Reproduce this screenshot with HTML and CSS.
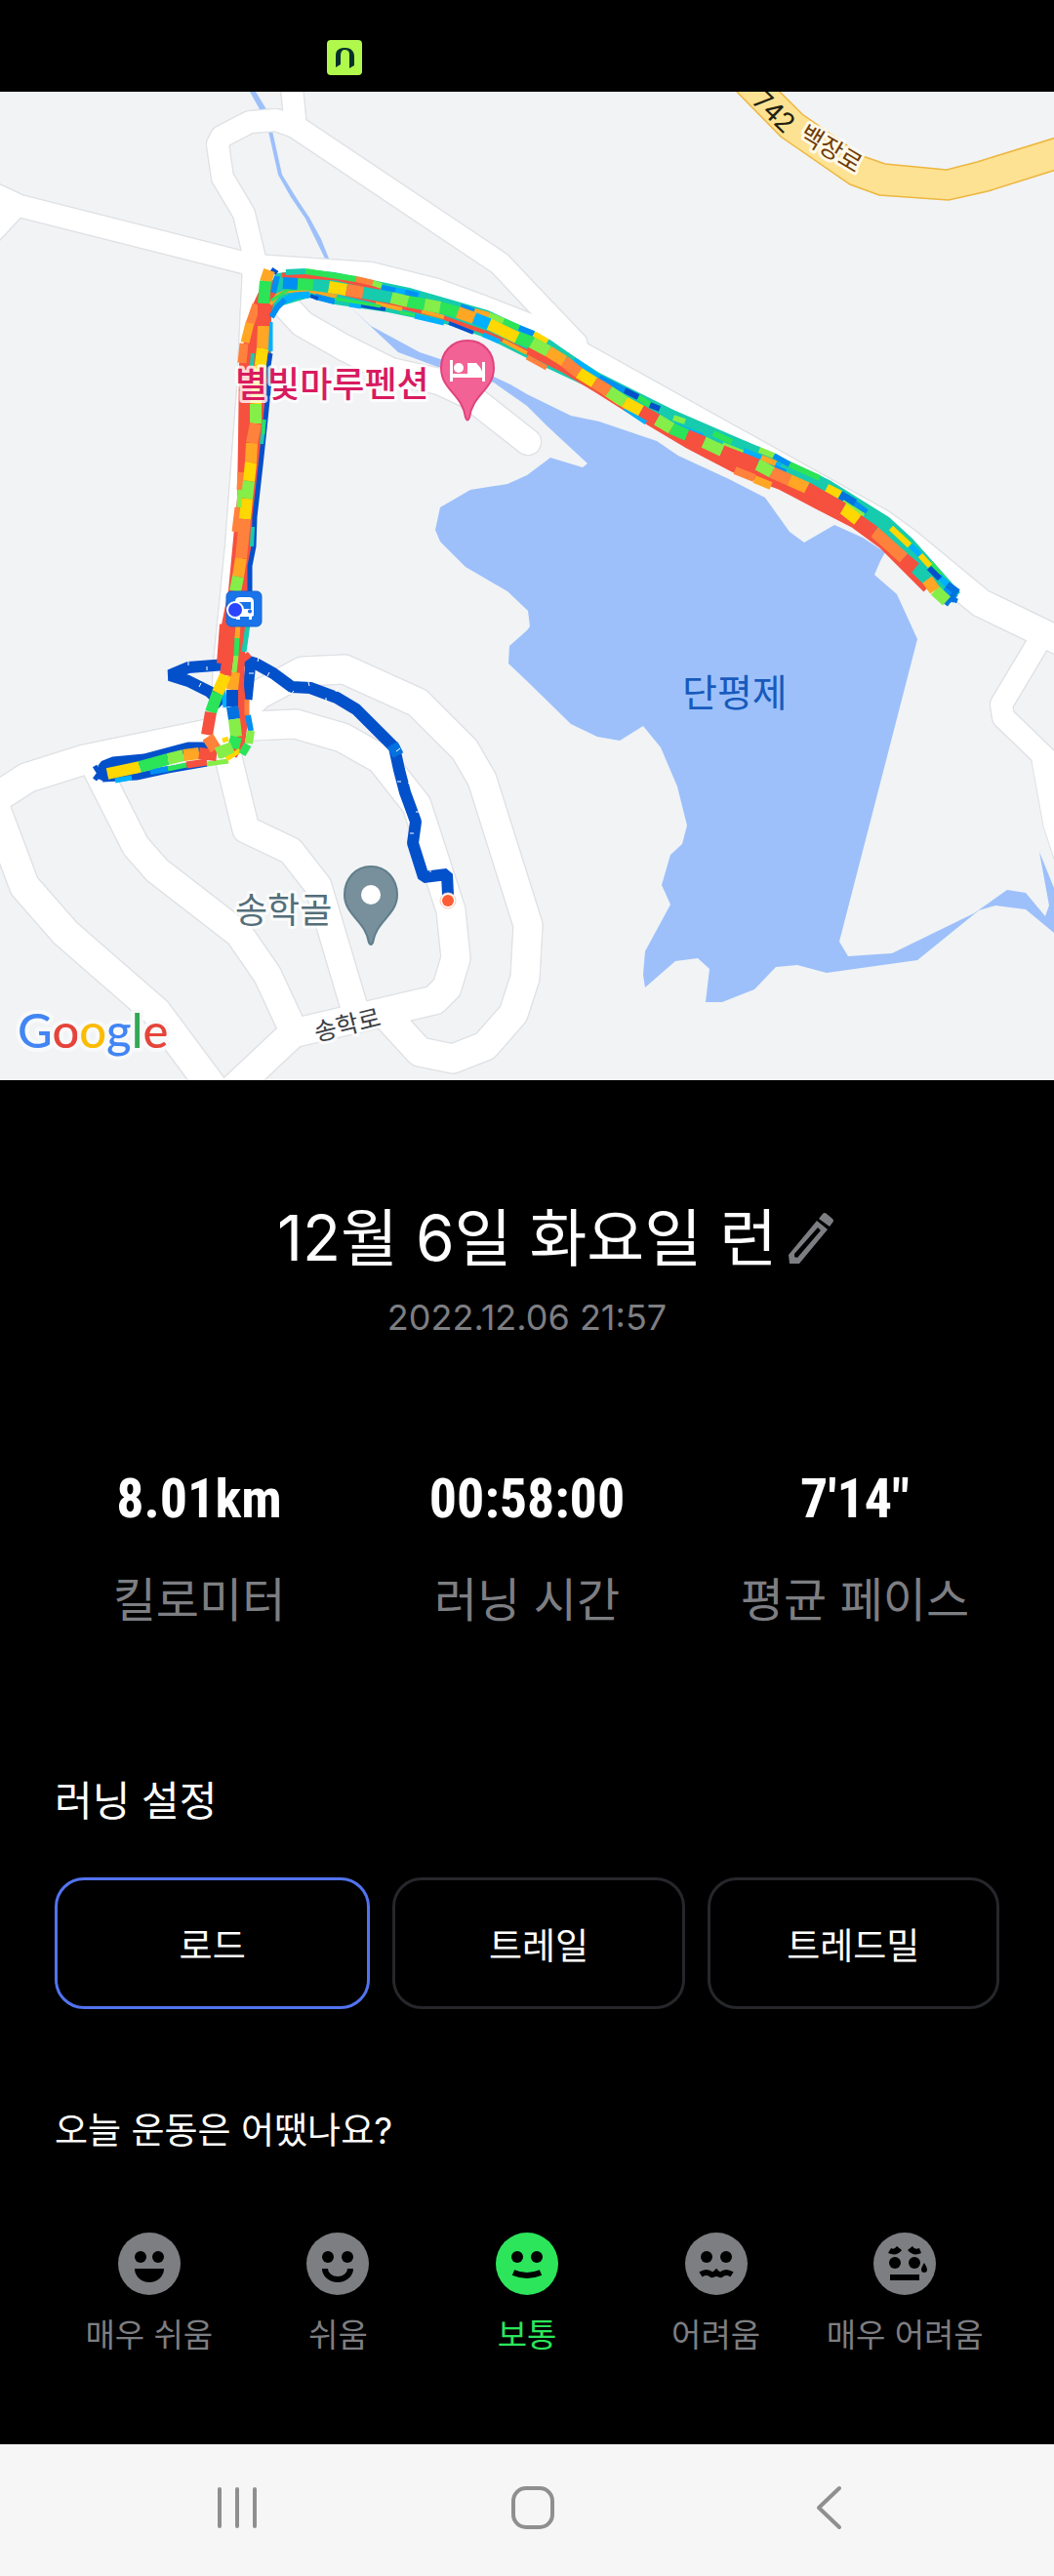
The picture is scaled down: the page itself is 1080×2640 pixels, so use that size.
FILE: index.html
```html
<!DOCTYPE html>
<html lang="ko">

<head>
    <meta charset="UTF-8">
    <meta name="viewport" content="width=device-width, initial-scale=1.0">
    <title>12월 6일 화요일 런</title>
    <link rel="stylesheet" href="styles.css">
</head>

<body>
    <header class="status_bar">
        <svg class="app_icon" viewBox="0 0 36 36" aria-hidden="true">
            <rect width="36" height="36" rx="4" fill="#b0f84b"/>
            <path d="M9 28V16C9 9 14 8 19 8C25 8 28 12 28 17V26L23 29V15C23 11 21 10 17 10C15 11 14 13 14 16V25Z" fill="#04302c"/>
        </svg>
    </header>

    <svg class="map" viewBox="0 94 1080 1013" role="img" aria-label="러닝 경로 지도">
        <defs>
            <g id="roads">
                <path stroke-width="22" d="M-12 196L20 211L261 272M14 214L-16 246M298 80L303 130L283 123L256 125L227 140L223 148L228 182L250 219L261 265"/>
                <path stroke-width="23" d="M303 130L512 270L545 305L590 352"/>
                <path stroke-width="28" d="M261 275L380 283L444 299L494 317L540 335L590 362L904 537L930 556L1005 618L1090 659"/>
                <path stroke-width="26" d="M280 300L310 332L352 356L400 380L450 391L480 405L541 453"/>
                <path stroke-width="26" d="M262 272L256 400L244 560L232 680L229 750"/>
                <path stroke-width="30" d="M235 748L85 779L28 797L-8 820L25 908L67 956L160 1037L218 1115"/>
                <path stroke-width="28" d="M100 790L139 867L161 892L245 957L274 999L300 1055"/>
                <path stroke-width="27" d="M230 760L252 850L298 872L326 908L364 1036"/>
                <path stroke-width="29" d="M235 1120L300 1059L445 1025L458 1012L467 982L462 933L427 825L390 778L351 756L303 742L235 745"/>
                <path stroke-width="29" d="M230 745L265 712L310 688L353 686L428 720L476 768L494 799L541 948L538 1002L526 1039L497 1072L464 1085L430 1078L397 1042"/>
                <path stroke-width="22" d="M1066 655L1026 722L1028 735L1085 790"/>
            </g>
        </defs>
        <rect y="94" width="1080" height="1013" fill="#f1f3f5"/>

        <!-- water -->
        <g fill="#9dc0fa">
            <path d="M256 94H262L273 112H266ZM274 130L279 134L289 179L305 205L317 223L329 245L337 265H333L313 224L298 202L285 179Z"/>
            <path d="M358 314L380 334L430 361L451 368L506 386L523 394L540 404L585 426L614 432L673 452L695 467L747 491L784 510L809 545L824 556L855 538L884 551L907 566L902 575L896 589L919 609L940 655L860 965L869 980L914 977L998 936L1032 912L1051 915L1071 939L1075 928L1065 873L1080 910V956L1051 932L1020 928L1003 933L940 984L847 997L817 989L795 991L773 1014L740 1027H723L727 993L715 982L692 985L661 1012L659 999L661 975L687 927L678 907L687 876L699 865L704 846L694 806L677 766L659 744L635 759L612 755L585 742L540 698L521 680L522 662L540 646L543 642L541 626L520 606L477 581L451 555L446 543L451 520L482 502L520 496L540 487L564 469L597 479L602 475L561 437L540 416L506 392L451 377L408 361Z"/>
        </g>

        <!-- roads: grey edge first, white on top -->
        <use href="#roads" class="road_edge"/>
        <path d="M1057 780L1069 847L1082 886V775L1060 765Z" fill="#fff" stroke="#dfe1e4" stroke-width="1"/>
        <use href="#roads" class="road_fill"/>
        <path d="M755 94L800 140L871 189L901 200L972 205L1012 196L1082 174V141L1001 166L970 174L907 168L884 160L822 117L799 94L780 80Z" fill="#fde293" stroke="#edb63f" stroke-width="1.5"/>

        <!-- warm up and cool down -->
        <g class="pace navy">
            <path stroke-width="12" d="M232 681L193 684L174 692L193 698L215 709L228 722M248 676L262 680L280 690L299 704L318 705L345 715L365 727L404 766L409 789L415 812L426 842L423 864L434 899L458 896L459 917"/>
            <path stroke-width="11" d="M105 799L106 785L116 781L148 778L193 766L213 766M257 678L253 717"/>
            <path stroke-width="7" d="M105 798L140 796L172 789L212 782"/>
            <path stroke-width="5" d="M97 785L106 799M97 799L108 784M263 313L269 298M278 276L284 280"/>
        </g>
        <path class="pace blue" stroke-width="12" d="M402 763L408 774"/>
        <path stroke="#fff" stroke-width="1" d="M193 678V682M212 683V687M265 674L264 678M276 689L274 693M301 708L298 712M316 699L317 703M334 715V719M346 705L344 709M407 801H411M418 803L421 801M426 832H431M420 854H424M441 890V894M410 767L406 770M206 700L204 704M255 690H260"/>

        <!-- earlier laps merge into one band -->
        <path fill="#17cbae" d="M284 280L313 276L343 279L420 295L500 318L547 340L560 347L614 382L690 420L778 458L850 492L911 530L935 552L984 607L974 618L940 585L905 553L864 527L780 490L700 450L620 405L560 377L500 347L460 333L397 320L343 312L317 305L290 313L278 323L278 370L270 360V300Z"/>
        <path fill="#f6503f" d="M272 284L284 290L278 323L277 370L272 413L267 477L261 540L255 603L250 640L246 640H227L234 605L243 510L244 450L245 373L250 350L260 310Z"/>
        <path class="pace navy" stroke-width="5" d="M277 362L275 375L276 390L272 430L267 477L261 530L260 560L256 580L256 606"/>
        <path class="pace teal" stroke-width="4" d="M271 430L268 455M259 540L258 560M259 362L258 375"/>
        <g class="pace red">
            <path stroke-width="10" d="M540 358L578 377L616 400L657 426L704 454L752 479L800 497L840 518L875 536L905 558L950 603"/>
            <path stroke-width="13" d="M673 432L721 457L752 476L776 482L827 504L864 526"/>
            <path stroke-width="5" d="M289 282L345 285L390 296"/>
            <path stroke-width="4" d="M344 299L400 312L450 324L501 342L540 360"/>
            <path stroke-width="12" d="M231 640L228 680"/>
            <path stroke-width="10" d="M236 636L232 690M247 640L245 703L249 739L246 762L238 774M250 671L254 676"/>
            <path stroke-width="7" d="M191 784L212 781"/>
        </g>
        <g class="pace orange">
            <path stroke-width="9" d="M263 312L256 332M250 352L248 372"/>
            <path stroke-width="7" d="M247 484L246 502M244 520L241 545"/>
            <path stroke-width="5" d="M253 717L253 733M540 366L560 377M365 286L382 290"/>
            <path stroke-width="8" d="M753 482L773 490"/>
        </g>
        <g class="pace amber">
            <path stroke-width="9" d="M256 331L251 351"/>
            <path stroke-width="8" d="M773 491L790 498"/>
            <path stroke-width="4" d="M277 312L285 302L295 298L318 298L345 304M385 311L412 317M432 319L455 325M515 349L540 362M632 411L650 423"/>
        </g>
        <g class="pace sky">
            <path stroke-width="7" d="M317 302L302 303L292 308"/>
            <path stroke-width="5" d="M640 418L662 433M358 312L370 314M277 330V360M425 324L455 331M495 343L512 350M118 800L135 797M228 702L231 725"/>
        </g>
        <path class="pace azure" stroke-width="6" d="M284 283L280 300M292 307L284 315L278 325M323 304L343 309M154 791L172 788M254 733L257 749"/>
        <path class="pace navy" stroke-width="4" d="M318 303L326 306M370 313L395 317M460 331L485 341"/>
        <path class="pace green" stroke-width="3" d="M343 306L390 314M410 320L425 323M278 308L295 297L320 295M270 430L270 445"/>
        <path class="pace yellow" stroke-width="4" d="M618 402L634 413"/>

        <!-- upper fringe -->
        <g stroke-width="6" class="pace">
            <path class="teal" d="M293 279L313 278M430 302L472 314M561 350L588 369M676 419L690 428M702 432L731 444M750 453L778 461M840 490L846 498M888 525L922 548"/>
            <path class="green" d="M313 278L365 286M516 329L532 336M654 407L666 415M731 444L750 453M809 476L840 490M922 548L933 559M953 577L967 594"/>
            <path class="orange" d="M365 286L382 290"/>
            <path class="lime" d="M382 290L391 293M501 323L516 329M690 428L702 432M778 461L793 467M740 456L765 466"/>
            <path class="sky" d="M391 295L430 302M588 369L614 387M762 462L800 478M933 559L943 569M962 590L974 603M690 436L720 447"/>
            <path class="azure" d="M391 295L405 298M415 300L428 303M472 314L486 319M532 336L547 342M614 387L640 400M793 467L809 476M876 516L888 525M715 447L735 456M790 478L805 484"/>
            <path class="amber" d="M486 319L501 323M780 469L795 475"/>
            <path class="yellow" d="M547 342L561 350M913 541L932 559M943 569L953 580"/>
            <path class="navy" d="M640 400L654 407M666 415L676 419M952 582L963 593"/>
        </g>
        <g class="pace" stroke-width="9">
            <path class="yellow" d="M847 500L861 507"/>
            <path class="blue" d="M861 507L876 516M970 600L981 608"/>
            <path class="azure" d="M966 606L979 614"/>
            <path class="lime" d="M862 516L884 530"/>
        </g>
        <path class="pace blue" stroke-width="5" d="M969 620L981 604M976 614L981 616"/>

        <!-- last lap, eastbound -->
        <g class="pace" stroke-width="12">
            <path class="azure" d="M290 290L305 291"/>
            <path class="green" d="M305 291L321 292M418 309L435 312M451 315L469 320M530 346L545 351M688 439L704 446"/>
            <path class="teal" d="M321 292L337 294M372 300L401 305M938 582L950 594"/>
            <path class="yellow" d="M337 294L355 297M501 332L530 346M593 382L609 392M640 412L657 421M864 521L879 533"/>
            <path class="orange" d="M355 297L372 300M578 370L593 382M609 392L624 401M791 484L809 492M896 545L926 572"/>
            <path class="lime" d="M401 305L418 309M435 312L451 315M545 351L562 360M624 401L640 412M673 430L688 439M721 453L740 462M776 476L791 484M958 605L970 616"/>
            <path class="amber" d="M469 320L486 326M562 360L578 370M809 492L827 500M950 594L958 605"/>
            <path class="sky" d="M486 326L501 332"/>
            <path class="red" d="M657 421L673 430M704 446L721 453M740 462L776 476M827 500L864 521M879 533L896 545M926 572L938 582"/>
        </g>

        <!-- last lap, southbound -->
        <g class="pace" stroke-width="12">
            <path class="amber" d="M276 277L272 289M270 334L269 357M258 454L257 474M247 572L244 591M240 689L238 707"/>
            <path class="green" d="M272 288L270 311M223 710L216 730"/>
            <path class="red" d="M270 311L270 334M241 606L237 650L231 692M216 730L212 753"/>
            <path class="yellow" d="M269 357L262 414M257 474L255 493M253 511L251 532M231 692L223 710"/>
            <path class="lime" d="M262 414L262 434M255 493L253 511M244 591L241 606"/>
            <path class="orange" d="M262 434L258 454M251 532L247 572M213 755L221 768"/>
            <path class="navy" d="M238 707L238 724"/>
            <path class="blue" d="M238 724L240 737"/>
            <path class="lime" d="M240 737L242 755M239 767L224 772"/>
            <path class="green" d="M242 755L239 767"/>
        </g>
        <g class="pace" stroke-width="5">
            <path class="lime" d="M246 502L245 520M242 672L240 689M212 783L234 780"/>
            <path class="green" d="M243 652L242 672M172 788L191 784"/>
            <path class="amber" d="M244 640L243 654"/>
            <path class="teal" d="M254 640L250 668"/>
            <path class="yellow" d="M228 759L234 757M232 778L246 769"/>
        </g>
        <g class="pace" stroke-width="8">
            <path class="lime" d="M257 749L255 762"/>
            <path class="green" d="M254 763L248 773"/>
        </g>
        <g class="pace" stroke-width="12">
            <path class="yellow" d="M110 793L143 786"/>
            <path class="green" d="M143 786L172 778"/>
            <path class="lime" d="M172 778L188 774"/>
            <path class="amber" d="M188 774L204 772"/>
            <path class="red" d="M204 772L222 774"/>
            <path class="orange" d="M213 756L221 768"/>
            <path class="lime" d="M222 772L238 766"/>
        </g>

        <!-- bus stop, start and finish points -->
        <rect x="232" y="606" width="36" height="36" rx="5" fill="#1a73e8" stroke="#1967d2"/>
        <path fill="#fff" fill-rule="evenodd" d="M241 616Q241 612 246 612H255Q260 612 260 617V631L258 632V635H255V632H246V635H242V631L241 630ZM244 617V624H257V617ZM254 626A2 2 0 1 0 258 627A2 2 0 0 0 254 626Z"/>
        <circle cx="241" cy="625" r="8" fill="#2a45ff" stroke="#fff" stroke-width="2"/>
        <circle cx="459" cy="923" r="8" fill="#fff" stroke="#ffc9ba" stroke-width="1"/>
        <circle cx="459" cy="923" r="6" fill="#ff5c35"/>

        <!-- pins -->
        <path d="M479 349C463 349 452 361 452 377C452 400 474 404 477 428Q479 433 481 428C484 404 506 400 506 377C506 361 495 349 479 349Z" fill="#f36294" stroke="#e0447c" stroke-width="2"/>
        <path d="M461 369H464V383H479V372H488Q495 379 494 383V371H497V391H494V387H464V391H461Z" fill="#fff"/>
        <circle cx="470" cy="377" r="5" fill="#fff"/>
        <path d="M380 888C364 888 353 901 353 917C353 938 375 944 378 966Q380 970 382 966C385 944 407 938 407 917C407 901 396 888 380 888Z" fill="#78909c" stroke="#607d8b" stroke-width="2"/>
        <circle cx="380" cy="917" r="10" fill="#fff"/>

        <!-- labels -->
        <text class="map_label poi" x="241" y="407">별빛마루펜션</text>
        <text class="map_label place" x="241" y="946">송학골</text>
        <text class="map_label lake" x="699" y="724">단평제</text>
        <text class="map_label street" text-anchor="middle" transform="translate(358 1059) rotate(-14)">송학로</text>
        <text class="map_label route_no" text-anchor="middle" transform="translate(786 121) rotate(44)">742</text>
        <text class="map_label highway" text-anchor="middle" transform="translate(847 160) rotate(31)">백장로</text>
        <text class="google" x="18" y="1074"><tspan fill="#4285f4">G</tspan><tspan fill="#e5443a">o</tspan><tspan fill="#fbbc05">o</tspan><tspan fill="#4285f4">g</tspan><tspan fill="#34a853">l</tspan><tspan fill="#e5443a">e</tspan></text>
    </svg>

    <main class="record">
        <div class="title_row">
            <h1 class="title">12월 6일 화요일 런</h1>
            <button class="edit" type="button" aria-label="제목 수정">
                <svg viewBox="0 0 46 52">
                    <path fill-rule="evenodd" d="M0 43L29 8L40 17L11 52H1ZM6 42V45L9 46L33 18L30 15Z"/>
                    <path d="M31 6L35 1Q37-1 39 1L45 6Q47 8 45 10L42 14Z"/>
                </svg>
            </button>
        </div>
        <time class="date" datetime="2022-12-06T21:57">2022.12.06 21:57</time>

        <dl class="stats">
            <div class="stat">
                <dd>8.01km</dd>
                <dt>킬로미터</dt>
            </div>
            <div class="stat">
                <dd>00:58:00</dd>
                <dt>러닝 시간</dt>
            </div>
            <div class="stat">
                <dd>7'14"</dd>
                <dt>평균 페이스</dt>
            </div>
        </dl>

        <h2 class="section_title">러닝 설정</h2>
        <div class="courses">
            <button class="course selected" type="button" aria-pressed="true">로드</button>
            <button class="course" type="button" aria-pressed="false">트레일</button>
            <button class="course" type="button" aria-pressed="false">트레드밀</button>
        </div>

        <h2 class="question">오늘 운동은 어땠나요?</h2>
        <div class="moods">
            <button class="mood" type="button" aria-pressed="false">
                <svg viewBox="0 0 64 64">
                    <circle class="face" cx="32" cy="32" r="32"/>
                    <circle cx="23" cy="25" r="6"/>
                    <circle cx="41" cy="25" r="6"/>
                    <path d="M17 37H47A15 14 0 0 1 17 37Z"/>
                </svg>
                <span>매우 쉬움</span>
            </button>
            <button class="mood" type="button" aria-pressed="false">
                <svg viewBox="0 0 64 64">
                    <circle class="face" cx="32" cy="32" r="32"/>
                    <circle cx="22" cy="25" r="6"/>
                    <circle cx="42" cy="25" r="6"/>
                    <path class="line" d="M19 37A13 11 0 0 0 45 37"/>
                </svg>
                <span>쉬움</span>
            </button>
            <button class="mood selected" type="button" aria-pressed="true">
                <svg viewBox="0 0 64 64">
                    <circle class="face" cx="32" cy="32" r="32"/>
                    <circle cx="22" cy="25" r="6"/>
                    <circle cx="42" cy="25" r="6"/>
                    <path class="line" d="M18 41Q32 47 46 41"/>
                </svg>
                <span>보통</span>
            </button>
            <button class="mood" type="button" aria-pressed="false">
                <svg viewBox="0 0 64 64">
                    <circle class="face" cx="32" cy="32" r="32"/>
                    <circle cx="22" cy="25" r="6"/>
                    <circle cx="42" cy="25" r="6"/>
                    <path class="line" d="M16 43Q22 39 27 43Q29 44 32 41Q35 44 37 43Q42 39 48 43"/>
                </svg>
                <span>어려움</span>
            </button>
            <button class="mood" type="button" aria-pressed="false">
                <svg viewBox="0 0 64 64">
                    <circle class="face" cx="32" cy="32" r="32"/>
                    <circle cx="22" cy="31" r="6"/>
                    <circle cx="42" cy="31" r="6"/>
                    <path d="M17 43H47V49H17ZM15 21L18 16Q21 18 24 14L29 18Q24 25 15 21ZM49 21L47 16Q42 18 40 14L35 18Q41 25 49 21ZM52 31Q55 36 55 38A3 3 0 0 1 49 38Q49 36 52 31Z"/>
                </svg>
                <span>매우 어려움</span>
            </button>
        </div>
    </main>

    <nav class="nav_bar">
        <button type="button" aria-label="최근 앱">
            <svg viewBox="0 0 48 48"><path d="M6 5V43M24 5V43M42 5V43"/></svg>
        </button>
        <button type="button" aria-label="홈">
            <svg viewBox="0 0 48 48"><rect x="4" y="4" width="40" height="40" rx="13"/></svg>
        </button>
        <button type="button" aria-label="뒤로">
            <svg viewBox="0 0 48 48"><path d="M35 4L14 24L35 44"/></svg>
        </button>
    </nav>
</body>

</html>
```
FILE: styles.css
```css
* {
    margin: 0;
    padding: 0;
    box-sizing: border-box;
}

body {
    display: flex;
    flex-direction: column;
    min-height: 100vh;
    background-color: #000;
    color: #fff;
    font-family: "Inter", "Noto Sans CJK KR", sans-serif;
}

button {
    border: none;
    background: none;
    color: inherit;
    font-family: inherit;
    cursor: pointer;
}

/* status bar */
.status_bar {
    display: flex;
    height: 94px;
    padding: 41px 0 0 335px;
}

.app_icon {
    width: 36px;
    height: 36px;
}

/* map */
.map {
    display: block;
    width: 100%;
    height: auto;
}

.road_edge,
.road_fill,
.pace {
    fill: none;
}

.road_edge,
.road_fill {
    stroke-linecap: round;
    stroke-linejoin: round;
}

/* the edge copy is spread one pixel on each side */
.road_edge {
    stroke: #dfe1e4;
    filter: drop-shadow(1px 0 0 #dfe1e4) drop-shadow(-1px 0 0 #dfe1e4) drop-shadow(0 1px 0 #dfe1e4) drop-shadow(0 -1px 0 #dfe1e4);
}

.road_fill {
    stroke: #fff;
}

.pace {
    stroke-linejoin: bevel;
}

.navy {
    stroke: #0350cb;
}

.blue {
    stroke: #0272e0;
}

.azure {
    stroke: #018ff2;
}

.sky {
    stroke: #01b0fe;
}

.teal {
    stroke: #17cbae;
}

.green {
    stroke: #2ce457;
}

.lime {
    stroke: #85ee48;
}

.yellow {
    stroke: #ffd702;
}

.amber {
    stroke: #ffa624;
}

.orange {
    stroke: #ff823c;
}

.red {
    stroke: #f6503f;
}

.map_label {
    font-family: "Noto Sans CJK KR", sans-serif;
    paint-order: stroke;
    stroke: rgba(255, 255, 255, .8);
    stroke-width: 6px;
    stroke-linejoin: round;
}

.poi {
    font-size: 36px;
    font-weight: 500;
    fill: #d81b60;
}

.place {
    font-size: 36px;
    fill: #546e7a;
}

.lake {
    font-size: 39px;
    fill: #185abc;
    stroke: none;
}

.street {
    font-size: 25px;
    fill: #3c4043;
}

.route_no {
    font-family: "Roboto", sans-serif;
    font-size: 28px;
    fill: #202010;
    stroke: none;
}

.highway {
    font-size: 25px;
    fill: #6e3c06;
}

.google {
    font-family: "Lato", sans-serif;
    font-size: 49px;
    font-weight: 500;
    paint-order: stroke;
    stroke: #f8f9fa;
    stroke-width: 8px;
    stroke-linejoin: round;
}

/* record */
.record {
    flex: 1;
    padding: 122px 56px 90px;
}

.title_row {
    display: grid;
    grid-template-columns: 1fr auto 1fr;
    align-items: center;
    gap: 12px;
}

.title {
    grid-column: 2;
    font-size: 64px;
    font-weight: 400;
    line-height: 80px;
}

.edit {
    justify-self: start;
    width: 46px;
    height: 52px;
}

.edit svg {
    display: block;
    fill: #7d7e82;
}

.date {
    display: block;
    margin-top: 17px;
    color: #7d7e82;
    font-size: 36px;
    line-height: 48px;
    text-align: center;
}

.stats {
    display: grid;
    grid-template-columns: repeat(3, 1fr);
    margin: 126px -20px 0;
    text-align: center;
}

.stat dd {
    font-family: "Roboto Condensed", "Roboto", sans-serif;
    font-size: 56px;
    font-weight: 700;
    line-height: 72px;
}

.stat dt {
    margin-top: 38px;
    color: #7d7e82;
    font-size: 48px;
    line-height: 60px;
}

.section_title {
    margin-top: 148px;
    font-size: 42px;
    font-weight: 400;
    line-height: 56px;
}

.courses {
    display: grid;
    grid-template-columns: 27fr 25fr 25fr;
    gap: 23px;
    margin-top: 50px;
}

.course {
    height: 135px;
    border: 3px solid #26272b;
    border-radius: 30px;
    font-size: 37px;
}

.course.selected {
    border-color: #5273f0;
}

.question {
    margin-top: 101px;
    font-size: 37px;
    font-weight: 400;
    line-height: 48px;
}

.moods {
    display: grid;
    grid-template-columns: repeat(5, 1fr);
    margin-top: 80px;
}

.mood {
    display: flex;
    flex-direction: column;
    align-items: center;
    gap: 19px;
    color: #7d7e82;
    font-size: 33px;
    line-height: 44px;
    white-space: nowrap;
}

.mood.selected {
    color: #2ce55b;
}

.mood svg {
    width: 64px;
    height: 64px;
}

.mood .face {
    fill: currentColor;
}

.mood .line {
    fill: none;
    stroke: #000;
    stroke-width: 6;
}

/* bottom navigation */
.nav_bar {
    display: grid;
    grid-template-columns: repeat(3, 1fr);
    align-items: center;
    justify-items: center;
    height: 135px;
    padding: 0 80px 5px 92px;
    background-color: #f6f6f6;
}

.nav_bar svg {
    display: block;
    width: 48px;
    height: 48px;
    fill: none;
    stroke: #8f8f8f;
    stroke-width: 4;
    stroke-linecap: round;
    stroke-linejoin: round;
}
```
